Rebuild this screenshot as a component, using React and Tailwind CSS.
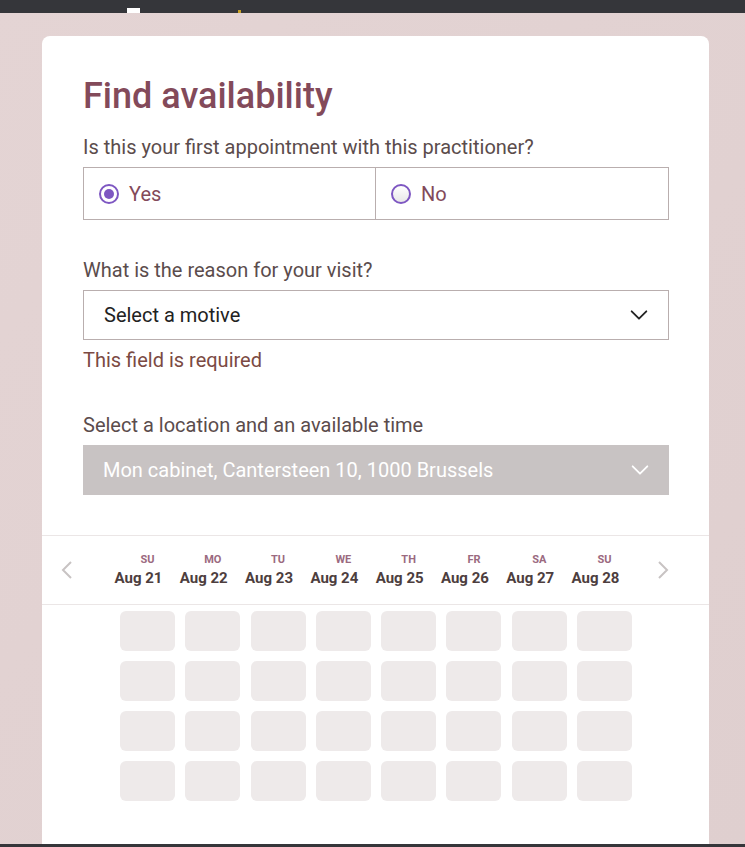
import React from 'react';

const days = [
  { d: 'SU', date: 'Aug 21' },
  { d: 'MO', date: 'Aug 22' },
  { d: 'TU', date: 'Aug 23' },
  { d: 'WE', date: 'Aug 24' },
  { d: 'TH', date: 'Aug 25' },
  { d: 'FR', date: 'Aug 26' },
  { d: 'SA', date: 'Aug 27' },
  { d: 'SU', date: 'Aug 28' },
];

function Chevron({ className }) {
  return (
    <svg className={className} viewBox="0 0 24 24" fill="none" stroke="currentColor" strokeWidth="2" strokeLinecap="round" strokeLinejoin="round">
      <path d="M4 8l8 8 8-8" />
    </svg>
  );
}

export default function App() {
  return (
    <div className="h-[847px] overflow-hidden flex flex-col bg-gradient-to-br from-[#e4d4d4] to-[#dfcfcf] font-['Roboto',sans-serif]">
      {/* browser strip */}
      <div className="h-[13px] shrink-0 bg-[#35363a] relative">
        <div className="absolute left-[127px] top-[8px] w-[13px] h-[5px] bg-white" />
        <div className="absolute left-[238px] top-[10px] w-[3px] h-[3px] bg-[#c9a227]" />
      </div>

      <div className="flex-1 min-h-0 pt-[23px] pl-[42px]">
        <div className="w-[667px] h-full bg-white rounded-t-lg overflow-hidden">
          <div className="pl-[41px] pr-[40px] pt-[38px]">
            <h1 className="text-[36px] leading-[44px] font-medium text-[#834a5a]">Find availability</h1>

            <p className="mt-[17px] text-[20px] leading-[24px] text-[#5b4c4c]">Is this your first appointment with this practitioner?</p>
            <div className="mt-[8px] grid grid-cols-2 border border-[#b9aeae] h-[53px]">
              <label className="flex items-center gap-[10px] pl-[15px] border-r border-[#b9aeae]">
                <span className="w-[20px] h-[20px] rounded-full border-2 border-[#7e57c2] flex items-center justify-center">
                  <span className="w-[10px] h-[10px] rounded-full bg-[#7e57c2]" />
                </span>
                <span className="text-[20px] text-[#834a5a]">Yes</span>
              </label>
              <label className="flex items-center gap-[10px] pl-[15px]">
                <span className="w-[20px] h-[20px] rounded-full border-2 border-[#7e57c2] bg-gradient-to-b from-white to-[#e8e8e8]" />
                <span className="text-[20px] text-[#834a5a]">No</span>
              </label>
            </div>

            <p className="mt-[38px] text-[20px] leading-[24px] text-[#5b4c4c]">What is the reason for your visit?</p>
            <div className="mt-[8px] h-[50px] border border-[#b9aeae] flex items-center justify-between pl-[20px] pr-[18px]">
              <span className="text-[20px] text-[#222]">Select a motive</span>
              <Chevron className="w-[22px] h-[22px] text-[#222]" />
            </div>
            <p className="mt-[8px] text-[20px] leading-[24px] text-[#7b4a43]">This field is required</p>

            <p className="mt-[41px] text-[20px] leading-[24px] text-[#5b4c4c]">Select a location and an available time</p>
            <div className="mt-[8px] h-[50px] bg-[#c8c3c3] flex items-center justify-between pl-[20px] pr-[18px]">
              <span className="text-[20px] text-white">Mon cabinet, Cantersteen 10, 1000 Brussels</span>
              <Chevron className="w-[22px] h-[22px] text-white" />
            </div>
          </div>

          {/* calendar */}
          <div className="mt-[40px] border-t border-[#ebe6e6]">
            <div className="h-[69px] flex items-center border-b border-[#ebe6e6]">
              <svg className="ml-[18px] w-[14px] h-[20px] text-[#c8c3c3]" viewBox="0 0 14 20" fill="none" stroke="currentColor" strokeWidth="2">
                <path d="M11 2L3 10l8 8" />
              </svg>
              <div className="ml-[46px] grid grid-cols-8 gap-x-[10.33px] w-[512px]">
                {days.map((x, i) => (
                  <div key={i} className="flex flex-col items-center">
                    <span className="text-[11px] leading-[14px] font-bold text-[#9b6a80]">{x.d}</span>
                    <span className="mr-[18px] mt-[2px] text-[15px] leading-[18px] font-bold text-[#4d3e3e] whitespace-nowrap">{x.date}</span>
                  </div>
                ))}
              </div>
              <svg className="ml-[24px] w-[14px] h-[20px] text-[#c8c3c3]" viewBox="0 0 14 20" fill="none" stroke="currentColor" strokeWidth="2">
                <path d="M3 2l8 8-8 8" />
              </svg>
            </div>
            <div className="mt-[6px] ml-[78px] grid grid-cols-8 gap-x-[10.33px] gap-y-[10px] w-[512px]">
              {Array.from({ length: 32 }).map((_, i) => (
                <div key={i} className="h-[40px] rounded-md bg-[#eeeaea]" />
              ))}
            </div>
          </div>
        </div>
      </div>

      <div className="h-[3px] shrink-0 bg-[#35363a]" />
    </div>
  );
}
